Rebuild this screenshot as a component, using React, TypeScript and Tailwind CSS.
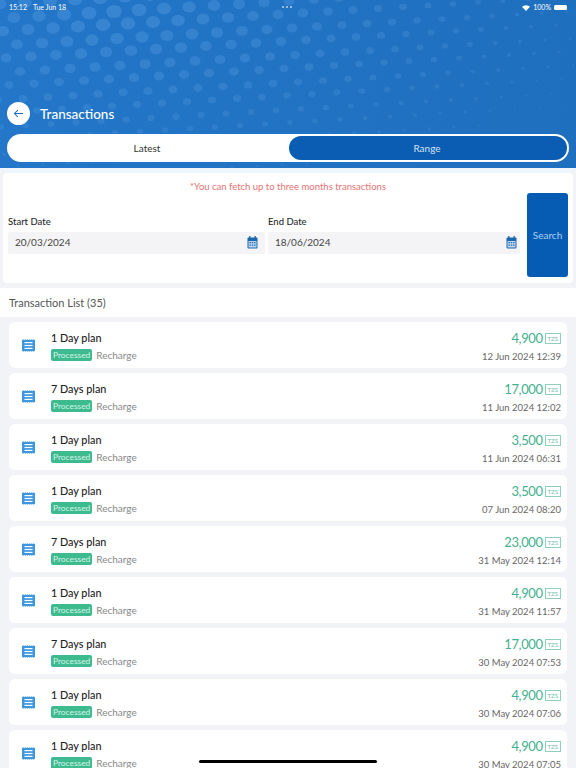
import React from "react";

const rows = [
  ["1 Day plan", "4,900", "12 Jun 2024 12:39"],
  ["7 Days plan", "17,000", "11 Jun 2024 12:02"],
  ["1 Day plan", "3,500", "11 Jun 2024 06:31"],
  ["1 Day plan", "3,500", "07 Jun 2024 08:20"],
  ["7 Days plan", "23,000", "31 May 2024 12:14"],
  ["1 Day plan", "4,900", "31 May 2024 11:57"],
  ["7 Days plan", "17,000", "30 May 2024 07:53"],
  ["1 Day plan", "4,900", "30 May 2024 07:06"],
  ["1 Day plan", "4,900", "30 May 2024 07:05"],
];

function Dots() {
  const dots: { x: number; y: number; r: number; o: number }[] = [];
  for (let j = -2; j < 16; j++) {
    for (let i = -3; i < 30; i++) {
      const x = i * 25 + (((j % 2) + 2) % 2 ? 12.5 : 0) + j * 1.5;
      const y = j * 13.5 - i * 1.5 + 4;
      const dx = (x - 110) / 470;
      const dy = (y - 10) / 165;
      const d = Math.sqrt(dx * dx + dy * dy);
      const r = Math.max(0, 7.8 * (1 - d * 0.8));
      if (r > 0.5) dots.push({ x, y, r, o: Math.max(0.1, 0.4 - d * 0.22) });
    }
  }
  return (
    <svg className="absolute inset-0 h-full w-full blur-[0.6px]" viewBox="0 0 576 168" preserveAspectRatio="none">
      {dots.map((d, i) => (
        <ellipse key={i} cx={d.x} cy={d.y} rx={d.r} ry={d.r * 0.85} fill="#5aa0e4" opacity={d.o} />
      ))}
    </svg>
  );
}

function Cal() {
  return (
    <svg width="11" height="13" viewBox="0 0 11 13" className="shrink-0">
      <rect x="0.5" y="1.5" width="10" height="11" rx="1" fill="#1c66ae" />
      <rect x="2.2" y="0" width="1.3" height="3" fill="#1c66ae" />
      <rect x="7.5" y="0" width="1.3" height="3" fill="#1c66ae" />
      <rect x="1.5" y="5" width="8" height="6.5" fill="#bcd6ee" />
      <g fill="#1c66ae">
        <rect x="2.5" y="6" width="1.4" height="1.2" />
        <rect x="4.8" y="6" width="1.4" height="1.2" />
        <rect x="7.1" y="6" width="1.4" height="1.2" />
        <rect x="2.5" y="8.5" width="1.4" height="1.2" />
        <rect x="4.8" y="8.5" width="1.4" height="1.2" />
        <rect x="7.1" y="8.5" width="1.4" height="1.2" />
      </g>
    </svg>
  );
}

function DocIcon() {
  return (
    <svg width="13" height="13" viewBox="0 0 13 13" className="shrink-0">
      <rect x="0" y="0.5" width="13" height="12" fill="#3d97de" />
      <path d="M0 0.4H13M0 12.6H13" stroke="#fff" strokeWidth="0.8" strokeDasharray="1 1" />
      <rect x="2.5" y="3" width="8" height="1.2" fill="#fff" />
      <rect x="2.5" y="5.9" width="8" height="1.2" fill="#fff" />
      <rect x="2.5" y="8.8" width="8" height="1.2" fill="#fff" />
    </svg>
  );
}

function DateField({ label, value, width, pad }: { label: string; value: string; width: string; pad: string }) {
  return (
    <div className={width}>
      <div className="mb-[3px] text-[9.5px] leading-[14px] font-medium text-[#2a2a2a]">{label}</div>
      <div className={`flex h-[22px] items-center justify-between rounded-[2px] bg-[#f4f4f6] pb-[1px] pl-[7px] text-[10px] text-[#444] ${pad}`}>
        <span>{value}</span>
        <Cal />
      </div>
    </div>
  );
}

export default function App() {
  return (
    <div className="relative h-[768px] w-[576px] overflow-hidden bg-[#f2f3f7] font-['Lato','Noto_Sans',sans-serif]">
      <header className="relative h-[168px] overflow-hidden bg-[linear-gradient(90deg,#2376c8,#1f6fbf)]">
        <Dots />
        <div className="relative flex h-[14px] items-center justify-between pt-[1px] pr-[9px] pl-[9px] text-[7px] text-white">
          <div className="flex gap-[6px]">
            <span>15:12</span>
            <span>Tue Jun 18</span>
          </div>
          <div className="flex items-center gap-[3px]">
            <svg width="8" height="6" viewBox="0 0 16 12">
              <path d="M8 12 L0 3.5 A11.5 11.5 0 0 1 16 3.5 Z" fill="#fff" />
            </svg>
            <span>100%</span>
            <div className="h-[5px] w-[13px] rounded-[1.5px] bg-white" />
          </div>
        </div>
        <div className="absolute top-[6px] left-[282px] flex gap-[2px]">
          <i className="h-[2px] w-[2px] rounded-full bg-white/70" />
          <i className="h-[2px] w-[2px] rounded-full bg-white/70" />
          <i className="h-[2px] w-[2px] rounded-full bg-white/70" />
        </div>
        <div className="relative mt-[88px] flex items-center pl-[7px]">
          <div className="flex h-[23px] w-[23px] items-center justify-center rounded-full bg-white">
            <svg width="11" height="11" viewBox="0 0 24 24" fill="none" stroke="#1f6db8" strokeWidth="2.2" strokeLinecap="round" strokeLinejoin="round">
              <path d="M21 12H3M10 5l-7 7 7 7" />
            </svg>
          </div>
          <span className="ml-[10px] pt-[1px] text-[13.5px] font-medium text-white">Transactions</span>
        </div>
        <div className="relative mx-[7px] mt-[9px] flex h-[28px] rounded-full bg-white text-[10px]">
          <div className="flex w-[280px] items-center justify-center pt-[1px] text-[#333]">Latest</div>
          <div className="m-[2px] flex flex-1 items-center justify-center rounded-full bg-[#0a5db3] pt-[1px] pr-[2px] text-[#cfe2f6]">Range</div>
        </div>
      </header>

      <div className="h-[5px] bg-[#eef5fb]" />

      <section className="mx-[3px] h-[110px] rounded-[4px] bg-white px-[5px]">
        <div className="h-[20px] pt-[8px] text-center text-[9.5px] leading-[11px] text-[#e57373]">*You can fetch up to three months transactions</div>
        <div className="flex justify-between">
          <div className="flex gap-[3px] pt-[22px]">
            <DateField label="Start Date" value="20/03/2024" width="w-[257px]" pad="pr-[7px]" />
            <DateField label="End Date" value="18/06/2024" width="w-[252px]" pad="pr-[3px]" />
          </div>
          <button className="h-[84px] w-[41px] rounded-[3px] bg-[#065cb3] text-[10px] text-[#a9d0f5]">Search</button>
        </div>
      </section>

      <div className="mt-[5px] flex h-[29px] items-center bg-white pt-[1px] pl-[9px] text-[11px] text-[#555]">Transaction List (35)</div>

      <div className="mx-[9px] mt-[5px] flex flex-col gap-[5px]">
        {rows.map(([name, amt, date], i) => (
          <div key={i} className="flex h-[46px] shrink-0 items-center rounded-[6px] bg-white pr-[6px] pl-[13px]">
            <DocIcon />
            <div className="ml-[16px] flex-1 pt-[2px]">
              <div className="text-[10.8px] leading-[14px] font-medium text-[#222]">{name}</div>
              <div className="mt-[4px] flex items-center gap-[4px] leading-[12px]">
                <span className="rounded-[2px] bg-[#3dbb8f] px-[2px] text-[8.4px] text-[#d5f3e8]">Processed</span>
                <span className="text-[10px] text-[#888]">Recharge</span>
              </div>
            </div>
            <div className="flex flex-col items-end pt-[2px]">
              <div className="flex items-center gap-[2px]">
                <span className="text-[13px] leading-[18px] tracking-[-0.4px] text-[#45b08f]">{amt}</span>
                <span className="border border-[#8fd0ba] px-[2px] text-[6px] leading-[9px] text-[#6fbfa5]">TZS</span>
              </div>
              <div className="mt-[4px] text-[9.5px] leading-[12px] text-[#666]">{date}</div>
            </div>
          </div>
        ))}
      </div>

      <div className="absolute bottom-[5px] left-[199px] h-[3px] w-[178px] rounded-full bg-black" />
    </div>
  );
}
